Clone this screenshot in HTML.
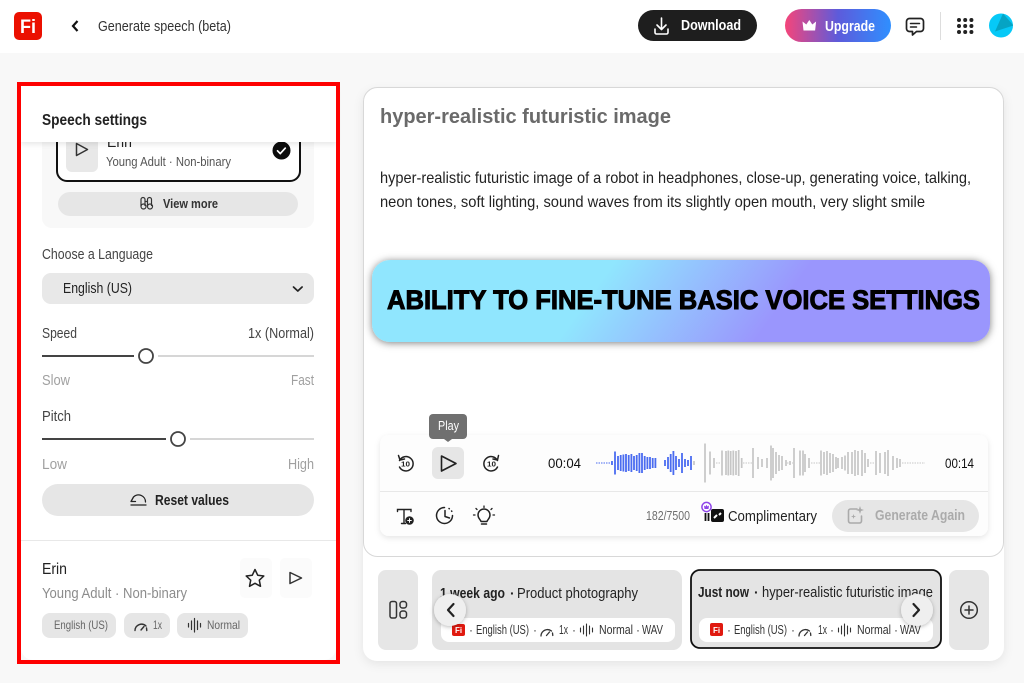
<!DOCTYPE html>
<html lang="en">
<head>
<meta charset="utf-8">
<title>Generate speech (beta)</title>
<style>
html,body{margin:0;padding:0;width:1024px;height:683px;overflow:hidden;background:#f8f8f8}
svg{display:block}
text{font-family:"Liberation Sans",sans-serif;white-space:pre}
.b{font-weight:700}
</style>
</head>
<body>
<svg width="1024" height="683" viewBox="0 0 1024 683" xmlns="http://www.w3.org/2000/svg">
<defs>
<filter id="s1" x="-10%" y="-10%" width="120%" height="120%"><feDropShadow dx="0" dy="3" stdDeviation="5" flood-color="#000" flood-opacity=".08"/></filter>
<filter id="s2" x="-10%" y="-30%" width="120%" height="160%"><feDropShadow dx="0" dy="1" stdDeviation="4" flood-color="#000" flood-opacity=".5"/></filter>
<filter id="s3" x="-5%" y="-20%" width="110%" height="140%"><feDropShadow dx="0" dy="2" stdDeviation="3" flood-color="#000" flood-opacity=".1"/></filter>
<filter id="s4" x="-40%" y="-40%" width="180%" height="180%"><feDropShadow dx="0" dy="1" stdDeviation="2" flood-color="#000" flood-opacity=".28"/></filter>
<linearGradient id="gb" gradientUnits="userSpaceOnUse" x1="620" y1="254" x2="750" y2="348"><stop offset="0" stop-color="#90e6fe"/><stop offset="1" stop-color="#9a96fd"/></linearGradient>
<linearGradient id="gu" x1="0" x2="1" y1="0" y2="0"><stop offset="0" stop-color="#f5457a"/><stop offset=".5" stop-color="#5d5bdb"/><stop offset="1" stop-color="#2f8fff"/></linearGradient>
<clipPath id="clipList"><rect x="21" y="142" width="315" height="100"/></clipPath>
<clipPath id="av"><circle cx="1001" cy="25.5" r="12"/></clipPath>
</defs>

<!-- top bar -->
<rect x="0" y="0" width="1024" height="53" fill="#fff"/>
<rect x="14" y="12" width="28" height="28" rx="5" fill="#eb1000"/>
<text x="20" y="33" font-size="19" class="b" fill="#fff" textLength="16" lengthAdjust="spacingAndGlyphs">Fi</text>
<path d="M77.5 21l-4.500 5 4.500 5" fill="none" stroke="#111" stroke-width="2.200"/>
<text x="98" y="31" font-size="15" fill="#333" textLength="133" lengthAdjust="spacingAndGlyphs">Generate speech (beta)</text>

<rect x="638" y="10" width="119" height="31" rx="15.500" fill="#1e1e1e"/>
<path d="M661.500 18v11M657 25l4.500 4.500 4.500-4.500M655 29v3.500a1.500 1.500 0 0 0 1.500 1.500h10a1.500 1.500 0 0 0 1.500-1.500V29" fill="none" stroke="#fff" stroke-width="1.600" stroke-linecap="round" stroke-linejoin="round"/>
<text x="681" y="30" font-size="15" class="b" fill="#fff" textLength="60" lengthAdjust="spacingAndGlyphs">Download</text>

<rect x="785" y="9" width="106" height="33" rx="16.500" fill="url(#gu)"/>
<path d="M803.500 30.500l-1-9 3.800 3 3-4.500 3 4.500 3.800-3-1 9z" fill="#fff"/>
<text x="825" y="31" font-size="15" class="b" fill="#fff" textLength="50" lengthAdjust="spacingAndGlyphs">Upgrade</text>

<path d="M909.500 18.500h11a3 3 0 0 1 3 3v7a3 3 0 0 1-3 3h-4l-4 3.500v-3.500h-3a3 3 0 0 1-3-3v-7a3 3 0 0 1 3-3z" fill="none" stroke="#222" stroke-width="1.700" stroke-linejoin="round"/>
<path d="M910.500 23.500h9M910.500 27h6" stroke="#222" stroke-width="1.500" stroke-linecap="round"/>
<rect x="940" y="12" width="1" height="28" fill="#ddd"/>
<g fill="#222">
<circle cx="959" cy="20" r="2"/><circle cx="965.200" cy="20" r="2"/><circle cx="971.400" cy="20" r="2"/>
<circle cx="959" cy="26" r="2"/><circle cx="965.200" cy="26" r="2"/><circle cx="971.400" cy="26" r="2"/>
<circle cx="959" cy="32" r="2"/><circle cx="965.200" cy="32" r="2"/><circle cx="971.400" cy="32" r="2"/>
</g>
<circle cx="1001" cy="25.500" r="12" fill="#06c9f7"/>
<path d="M1003 13.500l10.500 12-18.500 6z" fill="#05a4c4" clip-path="url(#av)"/>

<!-- left panel -->
<rect x="21" y="86" width="315" height="574" rx="12" fill="#fff"/>
<rect x="42" y="130" width="272" height="98" rx="10" fill="#f8f8f8"/>
<g clip-path="url(#clipList)">
<rect x="57" y="110" width="243" height="71" rx="10" fill="#fff" stroke="#111" stroke-width="2"/>
<rect x="66" y="120" width="32" height="52" rx="6" fill="#e8e8e8"/>
<path d="M76.500 143.500l11 6-11 6z" fill="none" stroke="#333" stroke-width="1.500" stroke-linejoin="round"/>
<text x="107" y="147" font-size="15" fill="#222" textLength="25" lengthAdjust="spacingAndGlyphs">Erin</text>
<text x="106" y="166" font-size="13" fill="#555" textLength="125" lengthAdjust="spacingAndGlyphs">Young Adult · Non-binary</text>
<circle cx="281.500" cy="150.500" r="9" fill="#0c0c0c"/>
<path d="M277.500 150.800l2.800 2.800 5-5.500" fill="none" stroke="#fff" stroke-width="1.700" stroke-linecap="round" stroke-linejoin="round"/>
</g>
<rect x="21" y="86" width="315" height="56" fill="#fff" filter="url(#s3)"/>
<text x="42" y="125" font-size="16" class="b" fill="#222" textLength="105" lengthAdjust="spacingAndGlyphs">Speech settings</text>
<rect x="58" y="192" width="240" height="24" rx="12" fill="#e6e6e6"/>
<path d="M141 206v-6.500a2 2 0 0 1 4 0V206M147.500 206v-6.500a2 2 0 0 1 4 0V206M145 201.500h2.500" fill="none" stroke="#333" stroke-width="1.200"/>
<circle cx="143.500" cy="206.500" r="2.500" fill="none" stroke="#333" stroke-width="1.200"/>
<circle cx="150" cy="206.500" r="2.500" fill="none" stroke="#333" stroke-width="1.200"/>
<text x="163" y="208" font-size="13" class="b" fill="#333" textLength="55" lengthAdjust="spacingAndGlyphs">View more</text>

<text x="42" y="259" font-size="15" fill="#444" textLength="111" lengthAdjust="spacingAndGlyphs">Choose a Language</text>
<rect x="42" y="273" width="272" height="31" rx="9" fill="#e8e8e8"/>
<text x="63" y="293" font-size="15" fill="#222" textLength="69" lengthAdjust="spacingAndGlyphs">English (US)</text>
<path d="M293.500 287l4.300 4 4.300-4" fill="none" stroke="#222" stroke-width="1.700" stroke-linecap="round" stroke-linejoin="round"/>

<text x="42" y="338" font-size="15" fill="#444" textLength="35" lengthAdjust="spacingAndGlyphs">Speed</text>
<text x="248" y="338" font-size="15" fill="#444" textLength="66" lengthAdjust="spacingAndGlyphs">1x (Normal)</text>
<rect x="42" y="355" width="92" height="2" fill="#444"/>
<rect x="158" y="355" width="156" height="2" fill="#d6d6d6"/>
<circle cx="146" cy="356" r="7" fill="#fff" stroke="#444" stroke-width="1.800"/>
<text x="42" y="385" font-size="15" fill="#a0a0a0" textLength="28" lengthAdjust="spacingAndGlyphs">Slow</text>
<text x="291" y="385" font-size="15" fill="#a0a0a0" textLength="23" lengthAdjust="spacingAndGlyphs">Fast</text>

<text x="42" y="421" font-size="15" fill="#444" textLength="29" lengthAdjust="spacingAndGlyphs">Pitch</text>
<rect x="42" y="438" width="124" height="2" fill="#444"/>
<rect x="190" y="438" width="124" height="2" fill="#d6d6d6"/>
<circle cx="178" cy="439" r="7" fill="#fff" stroke="#444" stroke-width="1.800"/>
<text x="42" y="469" font-size="15" fill="#a0a0a0" textLength="25" lengthAdjust="spacingAndGlyphs">Low</text>
<text x="288" y="469" font-size="15" fill="#a0a0a0" textLength="26" lengthAdjust="spacingAndGlyphs">High</text>

<rect x="42" y="484" width="272" height="32" rx="16" fill="#e6e6e6"/>
<path d="M131 505h15M145.500 502a7 7 0 0 0-12-5M131 501.500l2.500-4.500M131 501.500h4.500" fill="none" stroke="#222" stroke-width="1.300" stroke-linecap="round"/>
<text x="155" y="505" font-size="15" class="b" fill="#222" textLength="74" lengthAdjust="spacingAndGlyphs">Reset values</text>

<rect x="21" y="540" width="315" height="1" fill="#e8e8e8"/>
<text x="42" y="574" font-size="16" fill="#222" textLength="25" lengthAdjust="spacingAndGlyphs">Erin</text>
<text x="42" y="598" font-size="15" fill="#8c8c8c" textLength="145" lengthAdjust="spacingAndGlyphs">Young Adult · Non-binary</text>
<rect x="240" y="558" width="32" height="40" rx="5" fill="#fbfbfb"/>
<rect x="280" y="558" width="32" height="40" rx="5" fill="#fbfbfb"/>
<path d="M255 569.500l2.700 5.700 6.100.8-4.500 4.200 1.200 6.100-5.500-3-5.500 3 1.200-6.100-4.500-4.200 6.100-.8z" fill="none" stroke="#222" stroke-width="1.500" stroke-linejoin="round"/>
<path d="M290 572.500l11.500 5.500-11.500 5.500z" fill="none" stroke="#333" stroke-width="1.500" stroke-linejoin="round"/>

<rect x="42" y="613" width="74" height="25" rx="8" fill="#e6e6e6"/>
<rect x="124" y="613" width="46" height="25" rx="8" fill="#e6e6e6"/>
<rect x="177" y="613" width="71" height="25" rx="8" fill="#e6e6e6"/>
<text x="54" y="629" font-size="12" fill="#666" textLength="54" lengthAdjust="spacingAndGlyphs">English (US)</text>
<path d="M135 630.500a6.500 6.500 0 0 1 11-4.500M141 630l3-3.500M146.500 628l.3 2.500" fill="none" stroke="#333" stroke-width="1.400" stroke-linecap="round"/>
<text x="153" y="629" font-size="12" fill="#666" textLength="9" lengthAdjust="spacingAndGlyphs">1x</text>
<path d="M188.500 623.500v3.500M191.500 621v8.500M194.500 618.500v13.500M197.500 621v8.500M200.500 623.500v3.500" stroke="#333" stroke-width="1.200" stroke-linecap="round"/>
<text x="207" y="629" font-size="12" fill="#666" textLength="33" lengthAdjust="spacingAndGlyphs">Normal</text>

<!-- red frame -->
<rect x="19" y="84" width="319" height="578" fill="none" stroke="#fe0000" stroke-width="4"/>

<!-- right panel -->
<rect x="363" y="88" width="641" height="573" rx="14" fill="#fff" filter="url(#s1)"/>
<rect x="363.500" y="87.500" width="640" height="469" rx="14" fill="#fff" stroke="#d8d8d8"/>
<text x="380" y="123" font-size="20" class="b" fill="#6a6a6a" textLength="291" lengthAdjust="spacingAndGlyphs">hyper-realistic futuristic image</text>
<text x="380" y="183" font-size="16" fill="#222" textLength="591" lengthAdjust="spacingAndGlyphs">hyper-realistic futuristic image of a robot in headphones, close-up, generating voice, talking,</text>
<text x="380" y="207" font-size="16" fill="#222" textLength="545" lengthAdjust="spacingAndGlyphs">neon tones, soft lighting, sound waves from its slightly open mouth, very slight smile</text>

<rect x="372" y="260" width="618" height="82" rx="18" fill="url(#gb)" filter="url(#s2)"/>
<text x="387" y="309" font-size="27" class="b" fill="#000" stroke="#000" stroke-width="1" textLength="593" lengthAdjust="spacingAndGlyphs">ABILITY TO FINE-TUNE BASIC VOICE SETTINGS</text>

<!-- player -->
<rect x="380" y="435" width="608" height="101" rx="9" fill="#fdfdfd" filter="url(#s3)"/>
<rect x="380" y="491" width="608" height="1" fill="#e8e8e8"/>

<rect x="429" y="414" width="38" height="25" rx="4" fill="#707070"/>
<path d="M444 439h8l-4 3z" fill="#707070"/>
<text x="438" y="430" font-size="13" fill="#fff" textLength="21" lengthAdjust="spacingAndGlyphs">Play</text>
<rect x="432" y="447" width="32" height="32" rx="6" fill="#e6e6e6"/>
<path d="M441.500 456l14.500 7.500-14.500 7.500z" fill="none" stroke="#222" stroke-width="1.600" stroke-linejoin="round"/>

<path d="M399.500 460.500a7.200 7.200 0 1 1 0 6.500M398.500 455.500l1.500 4.500 4.500-1" fill="none" stroke="#222" stroke-width="1.500" stroke-linecap="round" stroke-linejoin="round"/>
<text x="401" y="466.500" font-size="7.500" class="b" fill="#222" textLength="9" lengthAdjust="spacingAndGlyphs">10</text>
<path d="M497.500 460.500a7.200 7.200 0 1 0 0 6.500M498.500 455.500l-1 4.500-4.500-1" fill="none" stroke="#222" stroke-width="1.500" stroke-linecap="round" stroke-linejoin="round"/>
<text x="487" y="466.500" font-size="7.500" class="b" fill="#222" textLength="9" lengthAdjust="spacingAndGlyphs">10</text>

<text x="548" y="468" font-size="14" fill="#111" textLength="33" lengthAdjust="spacingAndGlyphs">00:04</text>
<text x="945" y="468" font-size="14" fill="#111" textLength="29" lengthAdjust="spacingAndGlyphs">00:14</text>

<!-- waveform -->
<path d="M596 463h16" stroke="#4a6cf0" stroke-width="1" stroke-dasharray="1.500 1" fill="none"/>
<g transform="translate(0,463)">
<path fill="none" stroke="#4a6cf0" stroke-width="1.800" d="M612-2v4M615-11.500v23M618-7v14M620.700-8v16M623.400-8.500v17M626-9v18M628.700-8v16M631.400-9v18M634-7v14M636.700-8v16M639.400-10v20M642-10v20M644.700-7v14M647.400-6v12M650-6v12M652.700-5v10M655.400-5v10M665-3v6M668-6v12M670.700-9v18M673.400-12v24M676-7v14M679-4v8M682-10v20M685-4v8M688-3v6M691-7v14"/>
<path fill="none" stroke="#c6c6c6" stroke-width="1.700" d="M694-2v4M705-19.500v39M710-11.500v23M714-5v10M722-12.500v25M726-12v24M728.300-12.500v25M730.700-12v24M733.300-12.500v25M736-12v24M738.700-13v26M741.700-5v10M753-15v30M758-6v12M762-4v8M767-5v10M771-17.500v35M773-15v30M776-11v22M779-8v16M782-7v14M786-3v6M790-2v4M794-15v30M800-12.500v25M803-12.500v25M805-9v18M809-5v10M821-12.500v25M824-11v22M827-12v24M830-10v20M833-9v18M836-6v12M838-5v10M842-6v12M845-7.500v15M848-11v22M852-11v22M855-13v26M858-12v24M862-13v26M865-10v20M868-4v8M876-12v24M880-10v20M885-11v22M888-13v26M893-7v14M897-5v10M900-4v8"/>
<path fill="none" stroke="#c8c8c8" stroke-width="1" stroke-dasharray="1.500 1" d="M716 0h5M743 0h9M787 0h6M811 0h9M870 0h5M902 0h23"/>
</g>

<!-- toolbar icons -->
<path d="M397.500 511.500v-2h13.500v2M404 509.500v14M401.500 523.500h4" fill="none" stroke="#222" stroke-width="1.400" stroke-linecap="round"/>
<circle cx="409.500" cy="520.500" r="4.300" fill="#222"/>
<path d="M407.300 520.500h4.400M409.500 518.300v4.400" stroke="#fff" stroke-width="1"/>
<path d="M444.500 507.500a8 8 0 1 0 8 8" fill="none" stroke="#222" stroke-width="1.500" stroke-linecap="round"/>
<path d="M445 510.500v6l4.500 1.500" fill="none" stroke="#222" stroke-width="1.500" stroke-linecap="round" stroke-linejoin="round"/>
<path d="M449 508.500l.3.2M451.600 511l.2.3" stroke="#222" stroke-width="1.500" stroke-linecap="round"/>
<path d="M481 521.500c-.5-2-3-3-3-6.500a6 6 0 0 1 12 0c0 3.500-2.500 4.500-3 6.500zM481.500 524h5" fill="none" stroke="#222" stroke-width="1.500" stroke-linecap="round" stroke-linejoin="round"/>
<path d="M484 506v1.500M476 508.500l1 1M492 508.500l-1 1M473.500 515h1.500M493 515h1.500" stroke="#222" stroke-width="1.300" stroke-linecap="round"/>

<text x="646" y="520" font-size="13" fill="#6e6e6e" textLength="44" lengthAdjust="spacingAndGlyphs">182/7500</text>

<rect x="711" y="509" width="13" height="13" rx="2" fill="#111"/>
<path d="M714 518l3-3M719 515l2-2" stroke="#fff" stroke-width="2"/>
<path d="M705.500 513v8M708.500 513v8" stroke="#111" stroke-width="1.800"/>
<circle cx="706.500" cy="507" r="4.600" fill="#fff" stroke="#8e44e8" stroke-width="1.500"/>
<path d="M704.500 509l-.5-3.500 1.500 1 1-1.700 1 1.700 1.500-1-.5 3.500z" fill="#8e44e8"/>
<text x="728" y="521" font-size="15" fill="#222" textLength="89" lengthAdjust="spacingAndGlyphs">Complimentary</text>

<rect x="832" y="500" width="147" height="32" rx="16" fill="#e6e6e6"/>
<path d="M857 509h-6.500a2 2 0 0 0-2 2v10a2 2 0 0 0 2 2h9a2 2 0 0 0 2-2v-5" fill="none" stroke="#aaa" stroke-width="1.600" stroke-linecap="round"/>
<path d="M860 506l1 3 3 1-3 1-1 3-1-3-3-1 3-1zM853.500 514l.6 1.900 1.900.6-1.900.6-.6 1.900-.6-1.900-1.900-.6 1.900-.6z" fill="#aaa"/>
<text x="875" y="520" font-size="15" class="b" fill="#ababab" textLength="90" lengthAdjust="spacingAndGlyphs">Generate Again</text>

<!-- bottom strip -->
<rect x="378" y="570" width="40" height="80" rx="8" fill="#e6e6e6"/>
<rect x="390" y="601.500" width="6.500" height="16.500" rx="2" fill="none" stroke="#333" stroke-width="1.500"/>
<rect x="400" y="601.500" width="6.500" height="6.500" rx="2.500" fill="none" stroke="#333" stroke-width="1.500"/>
<rect x="400" y="611" width="6.500" height="7" rx="2.500" fill="none" stroke="#333" stroke-width="1.500"/>

<rect x="432" y="570" width="250" height="80" rx="9" fill="#e4e4e4"/>
<text x="440" y="598" font-size="15" class="b" fill="#222" textLength="65" lengthAdjust="spacingAndGlyphs">1 week ago</text>
<text x="510" y="598" font-size="14" class="b" fill="#222">·</text>
<text x="517" y="598" font-size="15" fill="#222" textLength="121" lengthAdjust="spacingAndGlyphs">Product photography</text>
<rect x="441" y="618" width="234" height="24" rx="8" fill="#fff"/>
<rect x="452" y="624" width="13" height="12" rx="2" fill="#e0190f"/>
<text x="455" y="633" font-size="8" class="b" fill="#fff">Fi</text>
<text x="469" y="634" font-size="12" fill="#333">·</text>
<text x="476" y="634" font-size="13" fill="#333" textLength="53" lengthAdjust="spacingAndGlyphs">English (US)</text>
<text x="533" y="634" font-size="12" fill="#333">·</text>
<path d="M541 636a6.500 6.500 0 0 1 10.500-5M546.500 635.500l3-3.500M552.500 633l.3 2.500" fill="none" stroke="#333" stroke-width="1.300" stroke-linecap="round"/>
<text x="559" y="634" font-size="13" fill="#333" textLength="9" lengthAdjust="spacingAndGlyphs">1x</text>
<text x="572" y="634" font-size="12" fill="#333">·</text>
<path d="M580.500 628v4M583.500 626v8M586.500 624v12M589.500 626v8M592.500 628v4" stroke="#333" stroke-width="1.100" stroke-linecap="round"/>
<text x="599" y="634" font-size="13" fill="#333" textLength="34" lengthAdjust="spacingAndGlyphs">Normal</text>
<text x="636" y="634" font-size="12" fill="#333">·</text>
<text x="642" y="634" font-size="13" fill="#333" textLength="21" lengthAdjust="spacingAndGlyphs">WAV</text>

<rect x="691" y="570" width="250" height="78" rx="9" fill="#e4e4e4" stroke="#111" stroke-width="1.800"/>
<text x="698" y="597" font-size="15" class="b" fill="#222" textLength="51" lengthAdjust="spacingAndGlyphs">Just now</text>
<text x="754" y="597" font-size="14" class="b" fill="#222">·</text>
<text x="762" y="597" font-size="15" fill="#222" textLength="171" lengthAdjust="spacingAndGlyphs">hyper-realistic futuristic image</text>
<rect x="699" y="618" width="234" height="24" rx="8" fill="#fff"/>
<rect x="710" y="623" width="13" height="13" rx="2" fill="#e0190f"/>
<text x="713" y="633" font-size="8" class="b" fill="#fff">Fi</text>
<text x="727" y="634" font-size="12" fill="#333">·</text>
<text x="734" y="634" font-size="13" fill="#333" textLength="53" lengthAdjust="spacingAndGlyphs">English (US)</text>
<text x="791" y="634" font-size="12" fill="#333">·</text>
<path d="M799 636a6.500 6.500 0 0 1 10.500-5M804.500 635.500l3-3.500M810.500 633l.3 2.500" fill="none" stroke="#333" stroke-width="1.300" stroke-linecap="round"/>
<text x="818" y="634" font-size="13" fill="#333" textLength="9" lengthAdjust="spacingAndGlyphs">1x</text>
<text x="830" y="634" font-size="12" fill="#333">·</text>
<path d="M838.500 628v4M841.500 626v8M844.500 624v12M847.500 626v8M850.500 628v4" stroke="#333" stroke-width="1.100" stroke-linecap="round"/>
<text x="857" y="634" font-size="13" fill="#333" textLength="34" lengthAdjust="spacingAndGlyphs">Normal</text>
<text x="894" y="634" font-size="12" fill="#333">·</text>
<text x="900" y="634" font-size="13" fill="#333" textLength="21" lengthAdjust="spacingAndGlyphs">WAV</text>

<circle cx="450" cy="610" r="16" fill="#efefef" filter="url(#s4)"/>
<path d="M453.500 604l-5.500 6 5.500 6" fill="none" stroke="#222" stroke-width="2.200" stroke-linecap="round" stroke-linejoin="round"/>
<circle cx="917" cy="610" r="16" fill="#efefef" filter="url(#s4)"/>
<path d="M913.500 604l5.500 6-5.500 6" fill="none" stroke="#222" stroke-width="2.200" stroke-linecap="round" stroke-linejoin="round"/>

<rect x="949" y="570" width="40" height="80" rx="8" fill="#e6e6e6"/>
<circle cx="969" cy="610" r="8.300" fill="none" stroke="#333" stroke-width="1.500"/>
<path d="M965 610h8M969 606v8" stroke="#333" stroke-width="1.500" stroke-linecap="round"/>
</svg>
</body>
</html>
